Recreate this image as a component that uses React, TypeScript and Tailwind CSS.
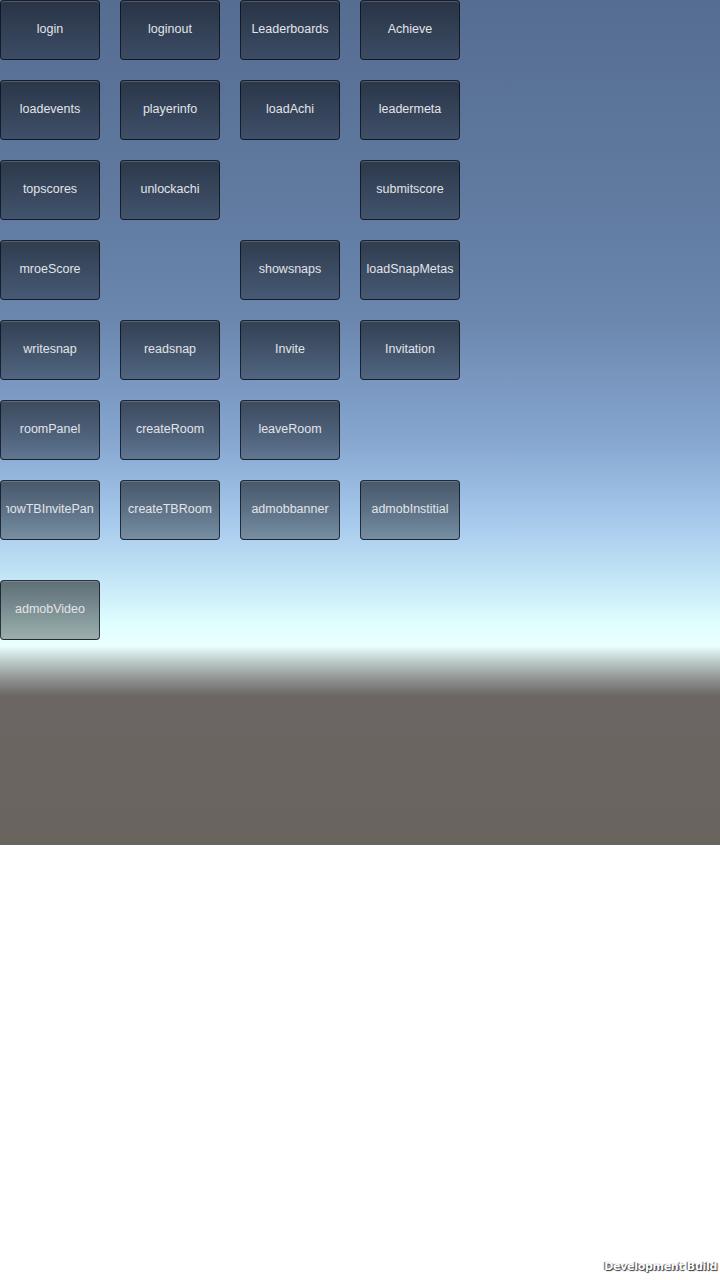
import React from 'react';

const rows: (string | null)[][] = [
  ['login', 'loginout', 'Leaderboards', 'Achieve'],
  ['loadevents', 'playerinfo', 'loadAchi', 'leadermeta'],
  ['topscores', 'unlockachi', null, 'submitscore'],
  ['mroeScore', null, 'showsnaps', 'loadSnapMetas'],
  ['writesnap', 'readsnap', 'Invite', 'Invitation'],
  ['roomPanel', 'createRoom', 'leaveRoom', null],
  ['showTBInvitePanel', 'createTBRoom', 'admobbanner', 'admobInstitial'],
];

function GuiButton({ label }: { label: string }) {
  return (
    <div className="w-[100px] h-[60px] rounded-[4px] border border-[rgba(10,14,22,0.75)] bg-[linear-gradient(to_bottom,rgba(0,0,0,0.52),rgba(0,0,0,0.32))] shadow-[inset_0_1px_0_rgba(255,255,255,0.18)] px-[5px] pb-[1px] flex items-center">
      <div className="w-full overflow-hidden flex justify-center">
        <span className="whitespace-nowrap text-[12.5px] leading-none text-[#e2e4e8] font-['Liberation_Sans',Arial,sans-serif]">
          {label}
        </span>
      </div>
    </div>
  );
}

export default function App() {
  return (
    <div className="relative w-[720px] h-[1280px] bg-white overflow-hidden">
      <div className="w-[720px] h-[845px] bg-[linear-gradient(to_bottom,#566d92_0px,#607aa0_200px,#6b87ae_320px,#86a6d0_440px,#a6c9ec_520px,#c4e6f7_580px,#e0ffff_625px,#ebfffe_646px,#c0d0cf_660px,#8d908e_680px,#6b6663_696px,#69645e_845px)]">
        <div className="flex flex-col gap-5">
          {rows.map((row, i) => (
            <div key={i} className="flex gap-5">
              {row.map((b, j) =>
                b ? <GuiButton key={j} label={b} /> : <div key={j} className="w-[100px] h-[60px]" />
              )}
            </div>
          ))}
          <div className="mt-5 flex">
            <GuiButton label="admobVideo" />
          </div>
        </div>
      </div>
      <div className="absolute right-[3px] bottom-[8px] text-[11px] leading-none font-bold tracking-[-0.3px] text-white font-['DejaVu_Sans',sans-serif] [text-shadow:1px_1px_1px_#333,-1px_0_1px_#555]">
        Development Build
      </div>
    </div>
  );
}
